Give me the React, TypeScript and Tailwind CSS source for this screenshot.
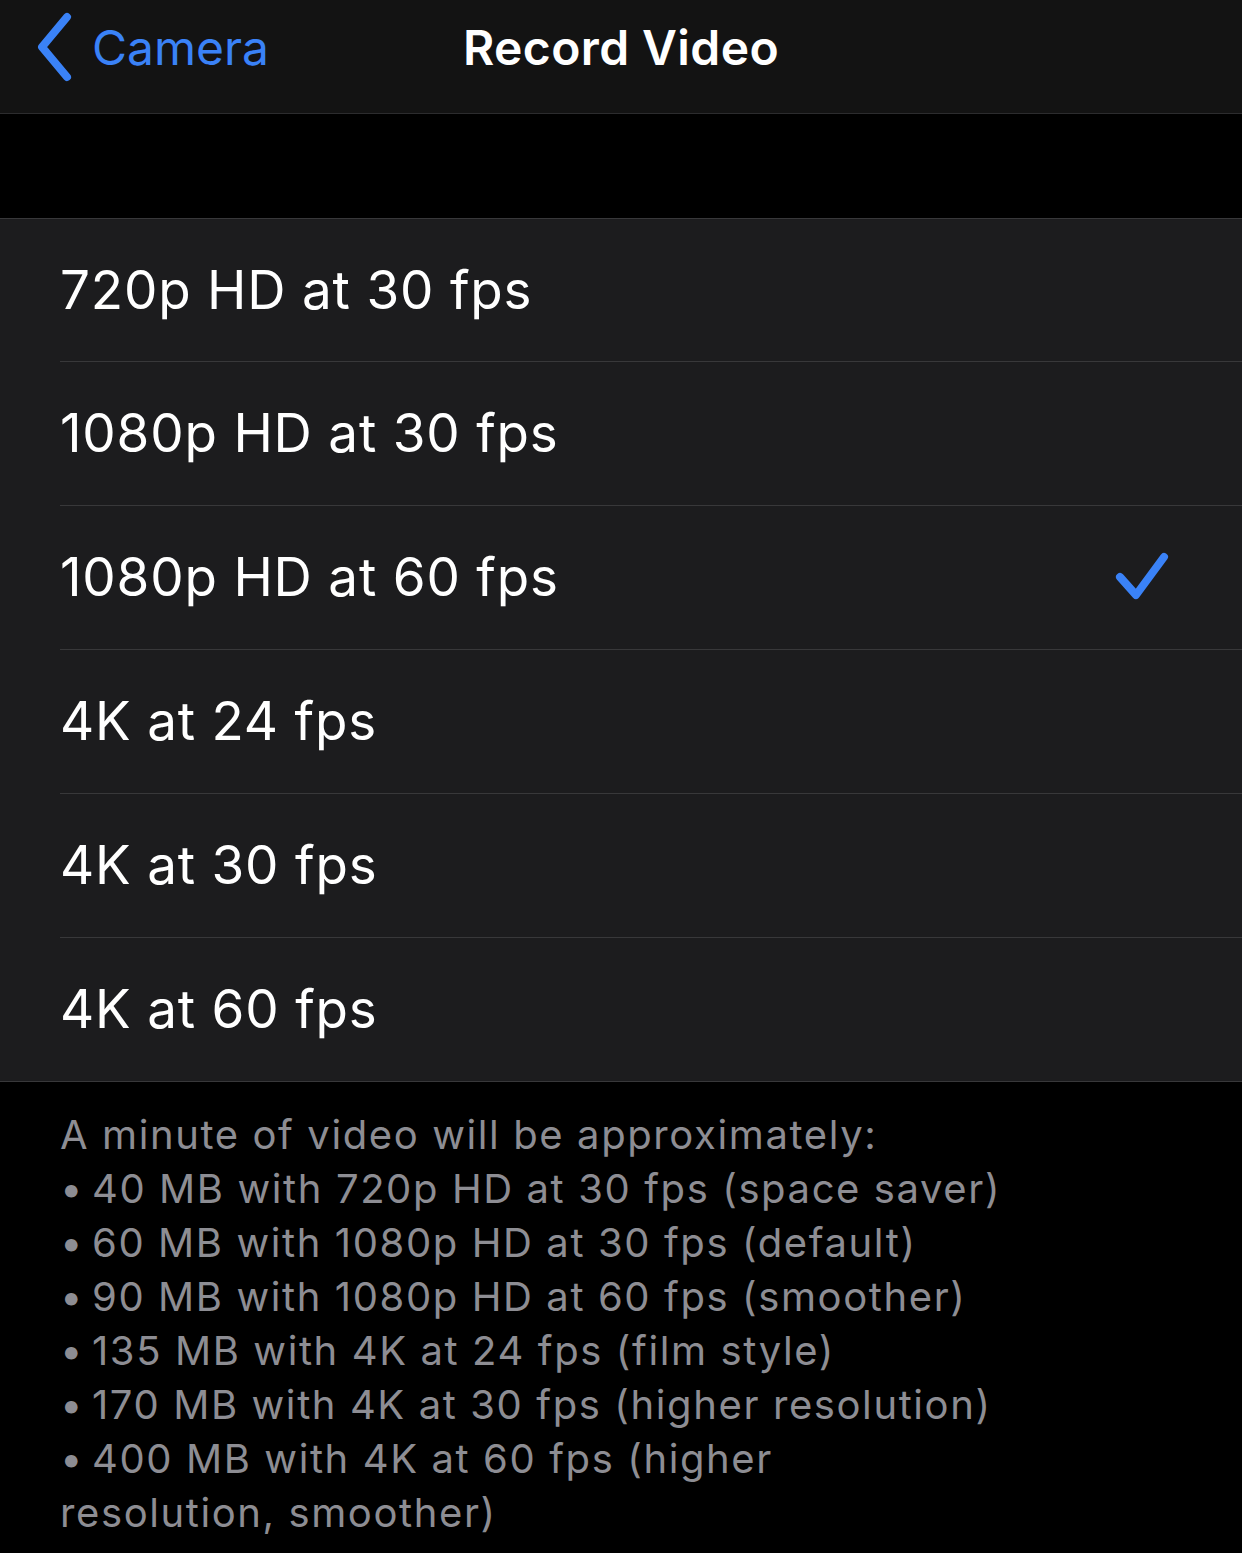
import { Fragment } from "react";

const options = [
  { label: "720p HD at 30 fps", selected: false },
  { label: "1080p HD at 30 fps", selected: false },
  { label: "1080p HD at 60 fps", selected: true },
  { label: "4K at 24 fps", selected: false },
  { label: "4K at 30 fps", selected: false },
  { label: "4K at 60 fps", selected: false },
];

const sizes = [
  "40 MB with 720p HD at 30 fps (space saver)",
  "60 MB with 1080p HD at 30 fps (default)",
  "90 MB with 1080p HD at 60 fps (smoother)",
  "135 MB with 4K at 24 fps (film style)",
  "170 MB with 4K at 30 fps (higher resolution)",
  "400 MB with 4K at 60 fps (higher",
];

function Chevron() {
  return (
    <svg width="44" height="72" viewBox="0 0 44 72" fill="none">
      <path d="M37 5 L12 35 L37 65" stroke="#3a82f7" strokeWidth="8" strokeLinecap="round" strokeLinejoin="round" />
    </svg>
  );
}

function Check() {
  return (
    <svg width="60" height="56" viewBox="0 0 60 56" fill="none">
      <path d="M8 27 L24 45 L52 7" stroke="#3a82f7" strokeWidth="8" strokeLinecap="round" strokeLinejoin="round" />
    </svg>
  );
}

export default function App() {
  return (
    <div className="min-h-screen bg-black font-['Inter','Liberation_Sans',sans-serif]">
      <div className="relative flex h-[114px] items-center border-b border-[#2c2c2e] bg-[#131313]">
        <div className="flex items-center pl-[30px] pb-[18px]">
          <Chevron />
          <span className="ml-[18px] text-[48px] leading-none text-[#3a82f7]">Camera</span>
        </div>
        <div className="absolute inset-x-0 top-0 flex h-[96px] items-center justify-center">
          <span className="text-[48px] font-semibold leading-none tracking-[0.4px] text-white">Record Video</span>
        </div>
      </div>

      <div className="h-[104px]" />

      <div className="border-y border-[#38383a] bg-[#1c1c1e]">
        {options.map((o, i) => (
          <Fragment key={o.label}>
            {i > 0 && <div className="ml-[60px] h-px bg-[#38383a]" />}
            <div
              className={`flex items-center justify-between pl-[60px] pr-[70px] ${i === 0 ? "h-[142px]" : "h-[143px]"}`}
            >
              <span className="text-[53px] leading-none tracking-[0.8px] text-white">{o.label}</span>
              {o.selected && <Check />}
            </div>
          </Fragment>
        ))}
      </div>

      <div className="px-[60px] pt-[26px] pb-[20px] text-[40px] leading-[54px] tracking-[1.6px] text-[#8d8d93]">
        <div>A minute of video will be approximately:</div>
        {sizes.map((s) => (
          <div key={s} className="flex">
            <span className="w-[32px] shrink-0">•</span>
            <span>{s}</span>
          </div>
        ))}
        <div>resolution, smoother)</div>
      </div>
    </div>
  );
}
